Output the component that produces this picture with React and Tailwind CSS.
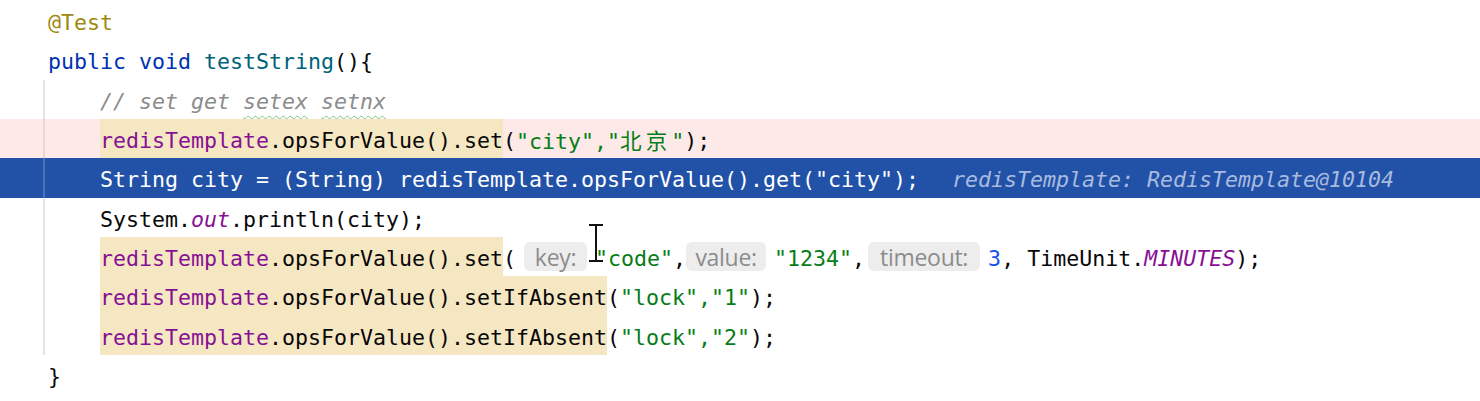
import React from "react";

const C = {
  ann: "text-[#9e880d]",
  kw: "text-[#0033b3]",
  fn: "text-[#00627a]",
  fld: "text-[#871094]",
  str: "text-[#067d17]",
  num: "text-[#1750eb]",
  cmt: "text-[#8c8c8c] italic",
  def: "text-[#080808]",
};

function T({ c = C.def, hl = false, children, className = "" }) {
  return (
    <span
      className={`flex items-center whitespace-pre pt-[5px] ${c} ${hl ? "bg-[#f6e7c3]" : ""} ${className}`}
    >
      <span className="whitespace-pre">{children}</span>
    </span>
  );
}

function Hint({ children, w }) {
  return (
    <span className="flex items-center">
      <span
        className={`flex h-[29px] items-center justify-center rounded-[6px] bg-[#ededed] pt-[1px] font-['Open_Sans',sans-serif] text-[23px] tracking-[-0.3px] text-[#8c8c8c] ${w}`}
      >
        {children}
      </span>
    </span>
  );
}

function Row({ bg = "", guide = null, indent = 0, children }) {
  return (
    <div className={`flex h-[39.33px] ${bg}`}>
      <div className="w-[43px] shrink-0" />
      <div className={`w-[2px] shrink-0 ${guide || ""}`} />
      <div className="w-[3px] shrink-0" />
      {indent > 0 && <div className="w-[52px] shrink-0" />}
      <div className="flex items-stretch">{children}</div>
    </div>
  );
}

const G = "bg-[#e4e4e4]";
const SQ = "underline decoration-wavy decoration-[#7cc47c] decoration-1 underline-offset-[6px]";

export default function App() {
  return (
    <div className="relative h-[401px] w-[1480px] overflow-hidden bg-white pt-[1px] font-['DejaVu_Sans_Mono','Noto_Sans_CJK_SC',monospace] text-[21.6px] text-[#080808]">
      <Row>
        <T c={C.ann}>@Test</T>
      </Row>
      <Row>
        <T c={C.kw}>public void </T>
        <T c={C.fn}>testString</T>
        <T>(){"{"}</T>
      </Row>
      <Row guide={G} indent={1}>
        <T c={C.cmt}>
          {"// set get "}
          <span className={SQ}>setex</span>
          {" "}
          <span className={SQ}>setnx</span>
        </T>
      </Row>
      <Row bg="bg-[#fce9e8]" guide="bg-[#e6d6d6]" indent={1}>
        <T c={C.fld} hl>redisTemplate</T>
        <T hl>.opsForValue().set</T>
        <T>(</T>
        <T c={C.str}>
          {'"city","'}
          <span className="font-['Noto_Sans_CJK_SC',sans-serif] tracking-[4px]">北京</span>
          {'"'}
        </T>
        <T>);</T>
      </Row>
      <Row bg="bg-[#2152a8]" guide="bg-[#4a72bb]" indent={1}>
        <T c="text-white">String city = (String) redisTemplate.opsForValue().get("city");</T>
        <T c="text-[#a9badf] italic ml-[33px]">redisTemplate: RedisTemplate@10104</T>
      </Row>
      <Row guide={G} indent={1}>
        <T>System.</T>
        <T c={`${C.fld} italic`}>out</T>
        <T>.println(city);</T>
      </Row>
      <Row guide={G} indent={1}>
        <T c={C.fld} hl>redisTemplate</T>
        <T hl>.opsForValue().set</T>
        <T>(</T>
        <span className="w-[8px]" />
        <Hint w="w-[63px]">key:</Hint>
        <span className="w-[8px]" />
        <T c={C.str}>"code"</T>
        <T>,</T>
        <Hint w="w-[80px]">value:</Hint>
        <span className="w-[8px]" />
        <T c={C.str}>"1234"</T>
        <T>,</T>
        <span className="w-[3px]" />
        <Hint w="w-[112px]">timeout:</Hint>
        <span className="w-[8px]" />
        <T c={C.num}>3</T>
        <T>, TimeUnit.</T>
        <T c={`${C.fld} italic`}>MINUTES</T>
        <T>);</T>
      </Row>
      <Row guide={G} indent={1}>
        <T c={C.fld} hl>redisTemplate</T>
        <T hl>.opsForValue().setIfAbsent</T>
        <T>(</T>
        <T c={C.str}>"lock","1"</T>
        <T>);</T>
      </Row>
      <Row guide={G} indent={1}>
        <T c={C.fld} hl>redisTemplate</T>
        <T hl>.opsForValue().setIfAbsent</T>
        <T>(</T>
        <T c={C.str}>"lock","2"</T>
        <T>);</T>
      </Row>
      <Row>
        <T>{"}"}</T>
      </Row>

      {/* I-beam text cursor */}
      <svg
        className="absolute left-[587px] top-[222px]"
        width="18"
        height="42"
        viewBox="0 0 18 42"
      >
        <g stroke="#fff" strokeWidth="4" strokeLinecap="square" fill="none">
          <path d="M3 3 H15 M9 3 V39 M3 39 H15" />
        </g>
        <g stroke="#111" strokeWidth="2" strokeLinecap="square" fill="none">
          <path d="M3 3 H15 M9 3 V39 M3 39 H15" />
        </g>
      </svg>
    </div>
  );
}
